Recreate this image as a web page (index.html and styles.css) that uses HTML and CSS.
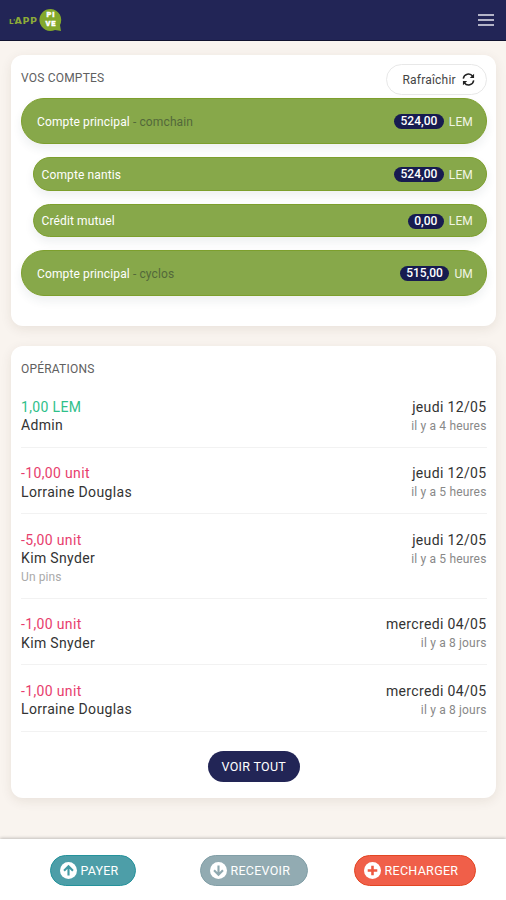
FILE: index.html
```html
<!DOCTYPE html>
<html lang="fr">
<head>
<meta charset="utf-8">
<title>L'App Pive</title>
<link rel="stylesheet" href="styles.css">
</head>
<body>
<header class="topbar">
  <div class="brand">
    <span class="brand-name"><small>L'</small>APP</span>
    <span class="bubble">
      <svg class="bubble-shape" viewBox="0 0 24 24"><path d="M12 1a11 11 0 1 0 4 21l6 1-1-6A11 11 0 0 0 12 1z" fill="#83a82c"/></svg>
      <span class="bubble-text"><span>PI</span><span>VE</span></span>
    </span>
  </div>
  <svg class="burger" viewBox="0 0 16 12"><path d="M0 1h16M0 6h16M0 11h16" stroke="#e4e4ed" stroke-width="1.4"/></svg>
</header>
<main class="content">
  <section class="card accounts">
    <div class="card-head">
      <h2>VOS COMPTES</h2>
      <button class="refresh"><span>Rafraîchir</span>
        <svg viewBox="0 0 14 14" fill="none" stroke="#222" stroke-width="1.6"><path d="M1.4 6A5.6 5.6 0 0 1 11.5 3.5M12.6 8A5.6 5.6 0 0 1 2.5 10.5"/><path d="M13 .8V5.4H8.4zM1 13.2V8.6h4.6z" fill="#222" stroke="none"/></svg>
      </button>
    </div>
    <div class="account"><span class="label">Compte principal <em>- comchain</em></span><b>524,00</b><span class="unit">LEM</span></div>
    <div class="account sub"><span class="label">Compte nantis</span><b>524,00</b><span class="unit">LEM</span></div>
    <div class="account sub last"><span class="label">Crédit mutuel</span><b>0,00</b><span class="unit">LEM</span></div>
    <div class="account"><span class="label">Compte principal <em>- cyclos</em></span><b>515,00</b><span class="unit">UM</span></div>
  </section>
  <section class="card operations">
    <h2>OPÉRATIONS</h2>
    <ul>
      <li><div><p class="amount plus">1,00 LEM</p><p class="name">Admin</p></div><div class="when"><p>jeudi 12/05</p><p class="ago">il y a 4 heures</p></div></li>
      <li><div><p class="amount">-10,00 unit</p><p class="name">Lorraine Douglas</p></div><div class="when"><p>jeudi 12/05</p><p class="ago">il y a 5 heures</p></div></li>
      <li><div><p class="amount">-5,00 unit</p><p class="name">Kim Snyder</p><p class="note">Un pins</p></div><div class="when"><p>jeudi 12/05</p><p class="ago">il y a 5 heures</p></div></li>
      <li><div><p class="amount">-1,00 unit</p><p class="name">Kim Snyder</p></div><div class="when"><p>mercredi 04/05</p><p class="ago">il y a 8 jours</p></div></li>
      <li><div><p class="amount">-1,00 unit</p><p class="name">Lorraine Douglas</p></div><div class="when"><p>mercredi 04/05</p><p class="ago">il y a 8 jours</p></div></li>
    </ul>
    <button class="all">VOIR TOUT</button>
  </section>
</main>
<footer class="actions">
  <button class="pay"><svg viewBox="0 0 16 16"><circle cx="8" cy="8" r="8" fill="#fff"/><path d="M8 12.8V4M3.8 8.2L8 4l4.2 4.2" fill="none" stroke="#439aa4" stroke-width="2"/></svg><span>PAYER</span></button>
  <button class="receive"><svg viewBox="0 0 16 16"><circle cx="8" cy="8" r="8" fill="#fff"/><path d="M8 3.2V12M3.8 7.8L8 12l4.2-4.2" fill="none" stroke="#8fa9b0" stroke-width="2"/></svg><span>RECEVOIR</span></button>
  <button class="topup"><svg viewBox="0 0 16 16"><circle cx="8" cy="8" r="8" fill="#fff"/><path d="M8 3.5v9M3.5 8h9" fill="none" stroke="#ee5840" stroke-width="2.4"/></svg><span>RECHARGER</span></button>
</footer>
</body>
</html>
```
FILE: styles.css
```css
* { box-sizing: border-box; }
body {
  margin: 0;
  height: 900px;
  display: flex;
  flex-direction: column;
  background: #f9f4ef;
  font-family: Roboto, "Liberation Sans", sans-serif;
  color: #333;
}
h2, p, ul { margin: 0; padding: 0; font-weight: 400; }
button { font: inherit; border: 0; display: flex; align-items: center; }
.topbar {
  height: 41px;
  flex: none;
  background: #222556;
  border-bottom: 1px solid #10122f;
  display: flex;
  align-items: center;
  justify-content: space-between;
  padding: 0 12px 0 9px;
}
.brand { display: flex; align-items: center; }
.brand-name { font: 700 9.5px/14px "DejaVu Sans", sans-serif; color: #8dab38; letter-spacing: .6px; width: 30px; padding-top: 2px; white-space: nowrap; }
.brand-name small { font-size: 7px; letter-spacing: -.5px; }
.bubble { position: relative; width: 24px; height: 24px; display: grid; place-items: center; }
.bubble-shape { position: absolute; inset: 0; width: 24px; height: 24px; }
.bubble-text { position: relative; top: -1px; display: flex; flex-direction: column; gap: .5px; font: 900 7.5px/9px Roboto, sans-serif; letter-spacing: .8px; color: #fff; text-align: center; -webkit-text-stroke: .4px #fff; }
.burger { width: 16px; height: 12px; margin-top: -1px; }
.content { flex: 1; padding: 14px 10px 0 11px; }
.card { background: #fff; border-radius: 12px; padding: 0 9.5px 0 10px; box-shadow: 0 3px 12px rgba(70, 40, 20, .09); }
.accounts { height: 271px; margin-bottom: 20px; padding-top: 9px; }
.card-head { display: flex; justify-content: space-between; height: 34px; }
h2 { font-size: 12px; line-height: 16px; color: #606060; letter-spacing: .2px; }
.card-head h2 { margin-top: 6px; }
.refresh { height: 31px; width: 101px; border: 1px solid #e8e8e8; border-radius: 16px; background: #fff; padding: 0 11px 0 16px; justify-content: space-between; font-size: 12px; color: #444; letter-spacing: .2px; }
.refresh svg { width: 13px; height: 13px; }
.account {
  height: 46px;
  border-radius: 23px;
  background: #87a84a;
  border: 1px solid #7d9f2d;
  color: #fff;
  display: flex;
  align-items: center;
  padding: 1px 12.5px 0 15px;
  font-size: 12px;
  margin-bottom: 13px;
  box-shadow: 0 5px 10px rgba(40, 60, 80, .08);
}
.account.sub { height: 34px; margin-left: 12px; padding-left: 7.5px; }
.account.sub.last { height: 33px; }
.label { flex: 1; letter-spacing: .12px; }
.label em { font-style: normal; color: #53683a; }
.account b { font-weight: 500; background: #171b50; border-radius: 8px; height: 15px; line-height: 15px; padding: 0 6.5px; margin-right: 5px; }
.unit { color: #f2f5e5; letter-spacing: .15px; }
.operations { height: 452px; padding-top: 15px; }
.operations ul { list-style: none; margin-top: 4px; }
li { display: flex; justify-content: space-between; height: 66.5px; padding-top: 16.5px; border-bottom: 1px solid #f2f2f2; font-size: 14px; line-height: 18.5px; font-weight: 300; letter-spacing: .35px; }
li:nth-child(3) { height: 84.5px; }
.amount { color: #e73d6d; }
.amount.plus { color: #2fc08a; }
.when { text-align: right; }
.ago { font-size: 12px; color: #888; letter-spacing: .17px; padding-top: .7px; }
.note { font-size: 12px; color: #aaa; letter-spacing: .1px; }
.all { height: 31px; width: 92px; margin: 19px auto 0; border-radius: 16px; background: #222556; color: #fff; font-size: 12.5px; letter-spacing: .3px; justify-content: center; padding: 0; }
.actions { height: 61px; flex: none; background: #fff; box-shadow: 0 -1px 3px rgba(0, 0, 0, .22); display: flex; align-items: flex-start; padding: 16px 30px 0 50px; }
.actions button { height: 31px; border-radius: 16px; color: #fff; font-size: 12.5px; padding: 0 0 0 9px; gap: 3.5px; border: 1px solid; }
.actions svg { width: 17px; height: 17px; flex: none; }
.actions .pay { width: 86px; background: #4d9ea8; border-color: #25929b; letter-spacing: .2px; }
.actions .receive { width: 108px; margin: 0 46px 0 64px; background: #92abb2; border-color: #829fa7; letter-spacing: .25px; }
.actions .topup { width: 122px; background: #f05f49; border-color: #e24623; letter-spacing: .3px; }
```
